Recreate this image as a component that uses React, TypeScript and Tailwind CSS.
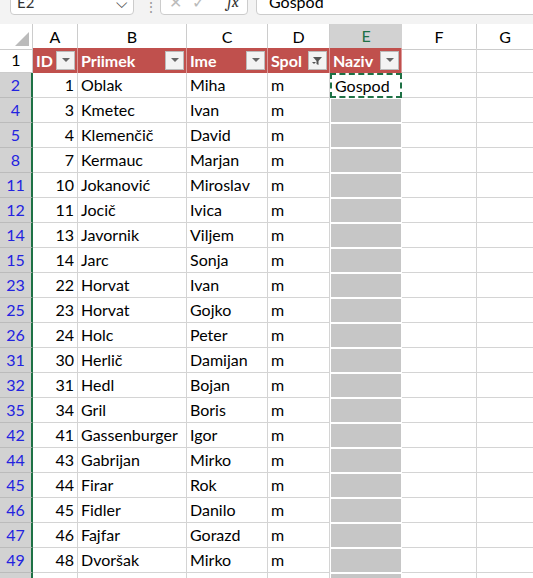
import React from "react";

const rows: [string, string, string, string][] = [
  ["2","1","Oblak","Miha"],["4","3","Kmetec","Ivan"],["5","4","Klemenčič","David"],["8","7","Kermauc","Marjan"],
  ["11","10","Jokanović","Miroslav"],["12","11","Jocič","Ivica"],["14","13","Javornik","Viljem"],["15","14","Jarc","Sonja"],
  ["23","22","Horvat","Ivan"],["25","23","Horvat","Gojko"],["26","24","Holc","Peter"],["31","30","Herlič","Damijan"],
  ["32","31","Hedl","Bojan"],["35","34","Gril","Boris"],["42","41","Gassenburger","Igor"],["44","43","Gabrijan","Mirko"],
  ["45","44","Firar","Rok"],["46","45","Fidler","Danilo"],["47","46","Fajfar","Gorazd"],["49","48","Dvoršak","Mirko"],["50","","",""],
];

const cols = "grid-cols-[33px_45px_109px_81px_62px_72px_75px_56px]";

function Arrow({ filter }: { filter?: boolean }) {
  return (
    <span className="ml-auto mr-[2px] w-[19px] h-[19px] bg-[#f3f3f3] border border-[#bbb] flex items-center justify-center">
      {filter ? (
        <svg width="12" height="10" viewBox="0 0 12 10"><path d="M1 1h9L6.5 5v4L4.5 8V5z" fill="#555"/><path d="M0 6l2 2 2-2z" fill="#555"/></svg>
      ) : (
        <svg width="8" height="5" viewBox="0 0 8 5"><path d="M0 0h8L4 4z" fill="#666"/></svg>
      )}
    </span>
  );
}

export default function App() {
  const cell = "border-r border-b border-[#d4d4d4] h-[25px] flex items-center text-[16px] text-black";
  return (
    <div className="w-[533px] h-[578px] bg-white overflow-hidden" style={{ fontFamily: "Lato, 'Liberation Sans', sans-serif" }}>
      <div className="h-[24px] bg-[#f3f3f3] relative">
        <div className="absolute left-[10px] top-[-12px] w-[124px] h-[27px] bg-white border border-[#ccc] rounded flex items-end pb-[4px] px-[6px] text-[15px] leading-none text-[#333]">
          E2<span className="ml-auto text-[#444]">⌵</span>
        </div>
        <div className="absolute left-[144px] top-[-4px] text-[#999] text-[14px]">⋮</div>
        <div className="absolute left-[160px] top-[-12px] w-[88px] h-[27px] bg-white border border-[#ccc] rounded flex items-end pb-[4px] gap-[10px] px-[8px] leading-none text-[#bbb]">
          <span>✕</span><span>✓</span><span className="italic text-[#333] font-serif ml-auto">fx</span>
        </div>
        <div className="absolute left-[256px] top-[-12px] w-[290px] h-[27px] bg-white border border-[#ccc] rounded flex items-end pb-[4px] px-[12px] leading-none text-[16px] text-black">Gospod</div>
      </div>
      <div className={`grid ${cols} h-[24px] bg-white text-[16px] text-black`}>
        <div className="border-r border-b border-[#ccc] relative">
          <svg className="absolute right-[3px] bottom-[3px]" width="14" height="14"><path d="M14 0V14H0z" fill="#bbb"/></svg>
        </div>
        {["A","B","C","D"].map(c => <div key={c} className="border-r border-b border-[#ccc] flex items-center justify-center">{c}</div>)}
        <div className="bg-[#d2d2d2] border-b-2 border-[#1e7145] flex items-center justify-center text-[#1e7145]">E</div>
        <div className="border-r border-b border-[#ccc] flex items-center justify-center">F</div>
        <div className="border-b border-[#ccc] flex items-center justify-center">G</div>
      </div>
      <div className={`grid ${cols}`}>
        <div className="border-r border-b border-[#ccc] h-[25px] flex items-center justify-center text-[16px]">1</div>
        {["ID","Priimek","Ime","Spol","Naziv"].map((h,i) => (
          <div key={h} className="bg-[#c0504d] border-r border-[#d99] h-[25px] flex items-center pl-[3px] text-white font-bold text-[16px]">
            {h}<Arrow filter={i===3} />
          </div>
        ))}
        <div className={cell}></div><div className="border-b border-[#d4d4d4]"></div>
        {rows.map((r, i) => (
          <React.Fragment key={r[0]}>
            <div className="bg-[#d2d2d2] border-r-2 border-r-[#1e7145] border-b border-b-[#bbb] h-[25px] flex items-center justify-center text-[16px] text-[#2323e0]">{r[0]}</div>
            <div className={`${cell} justify-end pr-[3px]`}>{r[1]}</div>
            <div className={`${cell} pl-[3px]`}>{r[2]}</div>
            <div className={`${cell} pl-[3px]`}>{r[3]}</div>
            <div className={`${cell} pl-[3px]`}>{r[2] ? "m" : ""}</div>
            {i === 0 ? (
              <div className="h-[25px] border-2 border-dashed border-[#1e7145] flex items-center pl-[3px] text-[16px]">Gospod</div>
            ) : (
              <div className="h-[25px] bg-[#c6c6c6] border border-white"></div>
            )}
            <div className={cell}></div>
            <div className="border-b border-[#d4d4d4] h-[25px]"></div>
          </React.Fragment>
        ))}
      </div>
    </div>
  );
}
